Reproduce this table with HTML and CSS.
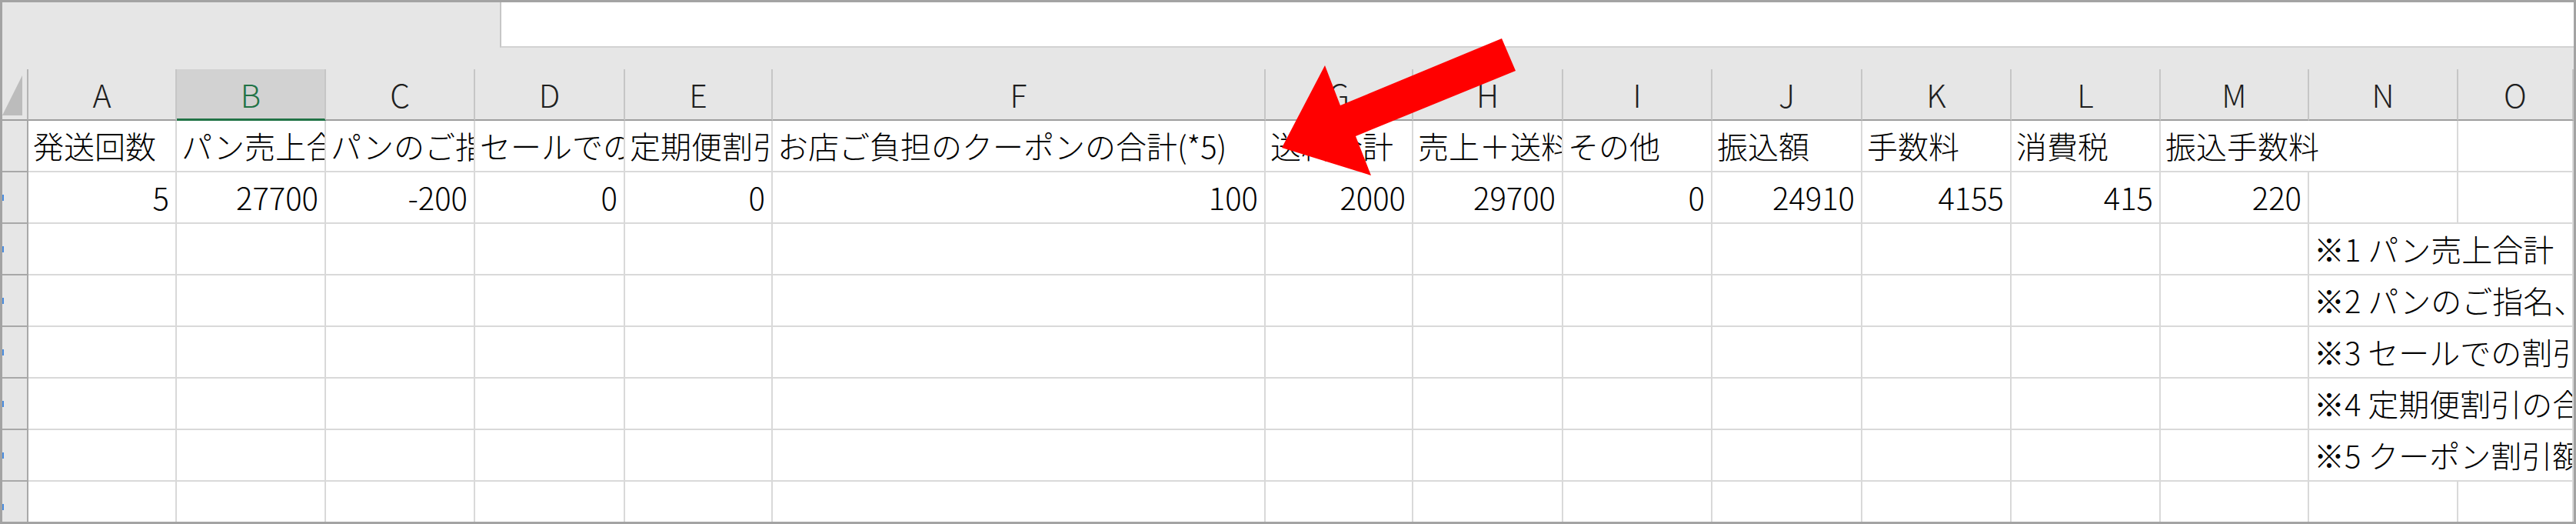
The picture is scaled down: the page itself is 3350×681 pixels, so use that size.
FILE: index.html
```html
<!DOCTYPE html>
<html lang="ja">
<head>
<meta charset="utf-8">
<title>Sheet</title>
<link rel="stylesheet" href="styles.css">
</head>
<body>
<div class="frame">
  <div class="top">
    <div class="top-left"></div>
    <div class="formula"></div>
  </div>
  <div class="gap"></div>
  <div class="grid">
    <div class="corner"><span class="tri"></span></div>
    <div class="hd">A</div>
    <div class="hd sel">B</div>
    <div class="hd">C</div>
    <div class="hd">D</div>
    <div class="hd">E</div>
    <div class="hd">F</div>
    <div class="hd">G</div>
    <div class="hd">H</div>
    <div class="hd">I</div>
    <div class="hd">J</div>
    <div class="hd">K</div>
    <div class="hd">L</div>
    <div class="hd">M</div>
    <div class="hd">N</div>
    <div class="hd">O</div>

    <div class="rh"></div>
    <div class="c">発送回数</div>
    <div class="c">パン売上合計(*1)</div>
    <div class="c">パンのご指名料(*2)</div>
    <div class="c">セールでの割引(*3)</div>
    <div class="c">定期便割引(*4)</div>
    <div class="c">お店ご負担のクーポンの合計(*5)</div>
    <div class="c">送料合計</div>
    <div class="c">売上＋送料</div>
    <div class="c">その他</div>
    <div class="c">振込額</div>
    <div class="c">手数料</div>
    <div class="c">消費税</div>
    <div class="c span2">振込手数料</div>
    <div class="c"></div>

    <div class="rh"><span class="rn"></span></div>
    <div class="c num">5</div>
    <div class="c num">27700</div>
    <div class="c num">-200</div>
    <div class="c num">0</div>
    <div class="c num">0</div>
    <div class="c num">100</div>
    <div class="c num">2000</div>
    <div class="c num">29700</div>
    <div class="c num">0</div>
    <div class="c num">24910</div>
    <div class="c num">4155</div>
    <div class="c num">415</div>
    <div class="c num">220</div>
    <div class="c"></div>
    <div class="c"></div>

    <div class="rh"><span class="rn"></span></div>
    <div class="c"></div><div class="c"></div><div class="c"></div><div class="c"></div><div class="c"></div><div class="c"></div><div class="c"></div><div class="c"></div><div class="c"></div><div class="c"></div><div class="c"></div><div class="c"></div><div class="c"></div>
    <div class="c span2">※1 パン売上合計 「お客様のご購入金額」</div>

    <div class="rh"><span class="rn"></span></div>
    <div class="c"></div><div class="c"></div><div class="c"></div><div class="c"></div><div class="c"></div><div class="c"></div><div class="c"></div><div class="c"></div><div class="c"></div><div class="c"></div><div class="c"></div><div class="c"></div><div class="c"></div>
    <div class="c span2">※2 パンのご指名、おまかせの差額</div>

    <div class="rh"><span class="rn"></span></div>
    <div class="c"></div><div class="c"></div><div class="c"></div><div class="c"></div><div class="c"></div><div class="c"></div><div class="c"></div><div class="c"></div><div class="c"></div><div class="c"></div><div class="c"></div><div class="c"></div><div class="c"></div>
    <div class="c span2">※3 セールでの割引額の合計</div>

    <div class="rh"><span class="rn"></span></div>
    <div class="c"></div><div class="c"></div><div class="c"></div><div class="c"></div><div class="c"></div><div class="c"></div><div class="c"></div><div class="c"></div><div class="c"></div><div class="c"></div><div class="c"></div><div class="c"></div><div class="c"></div>
    <div class="c span2">※4 定期便割引の合計</div>

    <div class="rh"><span class="rn"></span></div>
    <div class="c"></div><div class="c"></div><div class="c"></div><div class="c"></div><div class="c"></div><div class="c"></div><div class="c"></div><div class="c"></div><div class="c"></div><div class="c"></div><div class="c"></div><div class="c"></div><div class="c"></div>
    <div class="c span2">※5 クーポン割引額の合計</div>

    <div class="rh"><span class="rn"></span></div>
    <div class="c"></div><div class="c"></div><div class="c"></div><div class="c"></div><div class="c"></div><div class="c"></div><div class="c"></div><div class="c"></div><div class="c"></div><div class="c"></div><div class="c"></div><div class="c"></div><div class="c"></div><div class="c"></div><div class="c"></div>

    <div class="rh"><span class="rn"></span></div>
    <div class="c"></div><div class="c"></div><div class="c"></div><div class="c"></div><div class="c"></div><div class="c"></div><div class="c"></div><div class="c"></div><div class="c"></div><div class="c"></div><div class="c"></div><div class="c"></div><div class="c"></div><div class="c"></div><div class="c"></div>
  </div>
</div>
<svg class="arrow" width="3350" height="681" viewBox="0 0 3350 681" xmlns="http://www.w3.org/2000/svg">
  <polygon points="1667,192 1723,85 1743,137 1953,50 1971,92 1763,177 1783,228" fill="#ff0000"/>
</svg>
</body>
</html>
```
FILE: styles.css
```css
html, body {
  margin: 0;
  padding: 0;
  background: #ffffff;
}
body {
  position: relative;
  width: 3350px;
  height: 681px;
  overflow: hidden;
}
.frame {
  width: 3350px;
  height: 681px;
  box-sizing: border-box;
  border: 3px solid #a3a3a3;
  background: #e6e6e6;
  overflow: hidden;
  font-family: "Noto Sans CJK JP", "Noto Sans", sans-serif;
  font-weight: 300;
  color: #000;
}
.top {
  display: flex;
  height: 59px;
}
.top-left {
  width: 647px;
  flex: none;
}
.formula {
  flex: 1;
  background: #ffffff;
  border-left: 2px solid #c6c6c6;
  border-bottom: 2px solid #d2d2d2;
}
.gap {
  height: 28px;
}
.grid {
  display: grid;
  grid-template-columns: 34px 193px 194px 194px 195px 192px 641px 192px 195px 194px 195px 194px 194px 193px 194px 1fr;
  grid-auto-rows: 67px;
}
.grid > div {
  box-sizing: border-box;
  min-width: 0;
}
.corner {
  background: #e6e6e6;
  border-right: 2px solid #b4b4b4;
  border-bottom: 2px solid #9e9e9e;
  display: flex;
  align-items: flex-end;
}
.tri {
  display: block;
  width: 26px;
  height: 52px;
  margin-bottom: 5px;
  background: #bcbcbc;
  clip-path: polygon(100% 0, 100% 100%, 0 100%);
}
.hd {
  background: #e6e6e6;
  border-right: 2px solid #c6c6c6;
  border-bottom: 2px solid #9e9e9e;
  text-align: center;
  font-size: 41px;
  line-height: 65px;
  color: #1e1e1e;
}
.hd.sel {
  background: #d2d2d2;
  color: #217346;
  border-bottom: 3px solid #217346;
  line-height: 64px;
}
.rh {
  background: #e6e6e6;
  border-right: 2px solid #a8a8a8;
  border-bottom: 2px solid #a8a8a8;
  display: flex;
  align-items: center;
}
.rn {
  display: block;
  width: 2px;
  height: 8px;
  background: #4a8de0;
}
.c {
  background: #ffffff;
  border-right: 2px solid #d9d9d9;
  border-bottom: 2px solid #d9d9d9;
  font-size: 40px;
  line-height: 65px;
  padding: 0 6px;
  white-space: nowrap;
  overflow: hidden;
}
.num {
  text-align: right;
  padding-right: 8px;
}
.span2 {
  grid-column: span 2;
}
.arrow {
  position: absolute;
  left: 0;
  top: 0;
  pointer-events: none;
}
```
